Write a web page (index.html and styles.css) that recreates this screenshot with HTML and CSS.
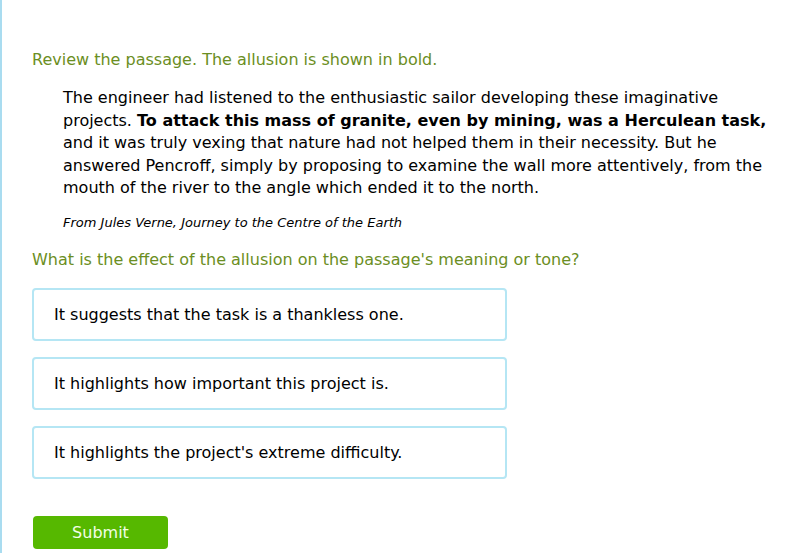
FILE: index.html
```html
<!DOCTYPE html>
<html>
<head>
<meta charset="utf-8">
<link rel="stylesheet" href="styles.css">
</head>
<body>
<div class="page">
  <p class="prompt">Review the passage. The allusion is shown in bold.</p>
  <div class="passage">
    <p class="text">The engineer had listened to the enthusiastic sailor developing these imaginative projects. <b>To attack this mass of granite, even by mining, was a Herculean task,</b> and it was truly vexing that nature had not helped them in their necessity. But he answered Pencroff, simply by proposing to examine the wall more attentively, from the mouth of the river to the angle which ended it to the north.</p>
    <p class="source">From Jules Verne, Journey to the Centre of the Earth</p>
  </div>
  <p class="question">What is the effect of the allusion on the passage's meaning or tone?</p>
  <div class="options">
    <div class="option">It suggests that the task is a thankless one.</div>
    <div class="option">It highlights how important this project is.</div>
    <div class="option">It highlights the project's extreme difficulty.</div>
  </div>
  <button class="submit">Submit</button>
</div>
</body>
</html>
```
FILE: styles.css
```css
html, body {
  margin: 0;
  padding: 0;
  background: #fff;
}
body {
  font-family: "DejaVu Sans", Verdana, sans-serif;
  color: #000;
}
.page {
  border-left: 2px solid #a9dcf0;
  min-height: 553px;
  box-sizing: border-box;
  padding: 48px 0 0 30px;
}
.prompt, .question {
  margin: 0;
  color: #6b8e23;
  font-size: 16px;
  line-height: 24px;
}
.passage {
  padding: 15px 0 0 31px;
  width: 710px;
}
.text {
  margin: 0;
  font-size: 16px;
  line-height: 22.5px;
}
.source {
  margin: 14px 0 0;
  font-size: 13px;
  font-style: italic;
  line-height: 18px;
}
.question {
  margin-top: 16px;
}
.options {
  display: flex;
  flex-direction: column;
  gap: 16px;
  margin-top: 16px;
  width: 475px;
}
.option {
  border: 2px solid #b5e6f4;
  border-radius: 4px;
  height: 53px;
  box-sizing: border-box;
  padding: 0 20px;
  display: flex;
  align-items: center;
  font-size: 16px;
}
.submit {
  margin-top: 37px;
  margin-left: 1px;
  width: 135px;
  height: 33px;
  border: none;
  border-radius: 4px;
  background: #56b800;
  color: #f2ffe6;
  font-family: "DejaVu Sans", Verdana, sans-serif;
  font-size: 16px;
}
```
